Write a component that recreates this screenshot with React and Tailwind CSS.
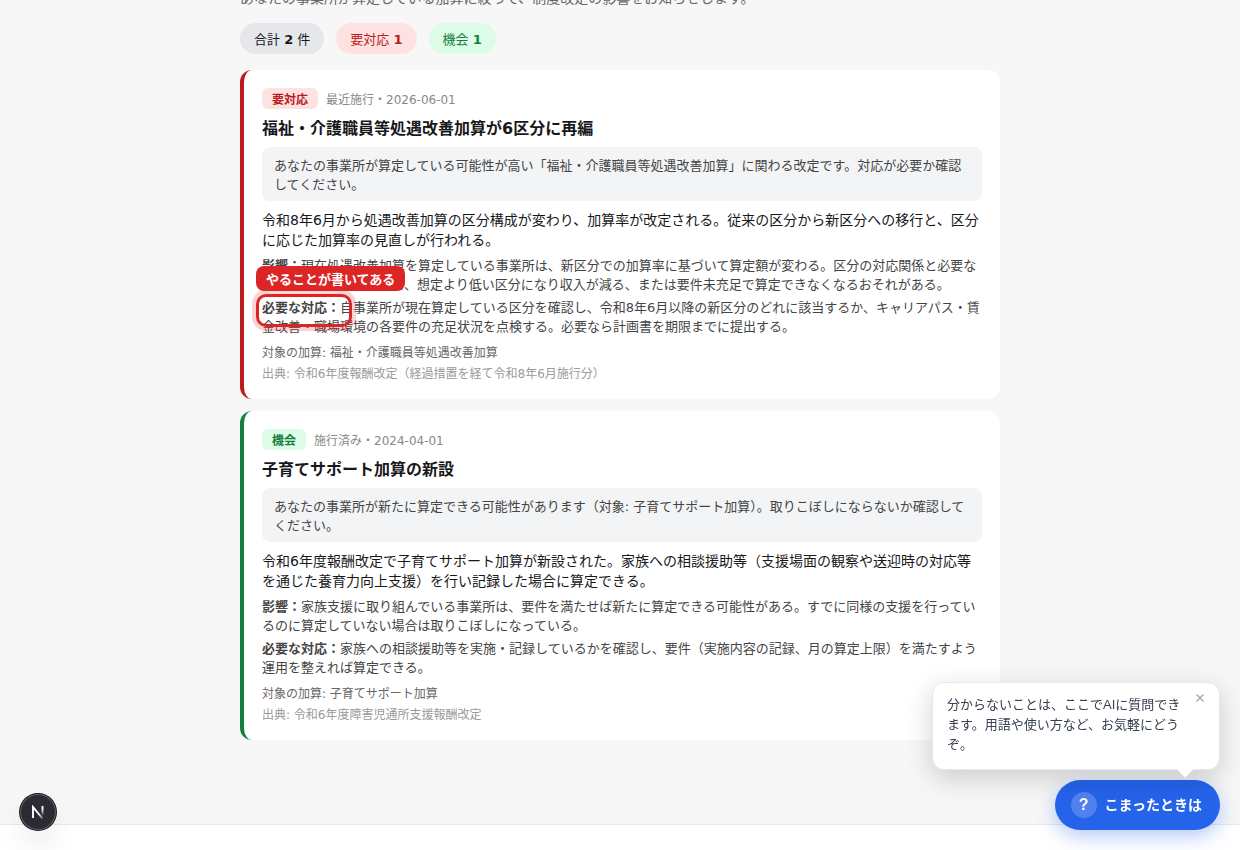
const summary = [
  { label: "合計", count: 2, unit: "件", className: "bg-[#e5e7eb] text-[#18181b]" },
  { label: "要対応", count: 1, className: "bg-[#fee2e2] text-[#b91c1c]" },
  { label: "機会", count: 1, className: "bg-[#dcfce7] text-[#15803d]" },
];

const tones = {
  action: {
    label: "要対応",
    border: "border-[#b91c1c]",
    badge: "bg-[#fee2e2] text-[#b91c1c]",
  },
  chance: {
    label: "機会",
    border: "border-[#15803d]",
    badge: "bg-[#dcfce7] text-[#15803d]",
  },
};

const revisions = [
  {
    id: "shogu",
    tone: "action",
    status: "最近施行・2026-06-01",
    title: "福祉・介護職員等処遇改善加算が6区分に再編",
    reason:
      "あなたの事業所が算定している可能性が高い「福祉・介護職員等処遇改善加算」に関わる改定です。対応が必要か確認してください。",
    body: "令和8年6月から処遇改善加算の区分構成が変わり、加算率が改定される。従来の区分から新区分への移行と、区分に応じた加算率の見直しが行われる。",
    impact:
      "現在処遇改善加算を算定している事業所は、新区分での加算率に基づいて算定額が変わる。区分の対応関係と必要な要件を確認していないと、想定より低い区分になり収入が減る、または要件未充足で算定できなくなるおそれがある。",
    todo: "自事業所が現在算定している区分を確認し、令和8年6月以降の新区分のどれに該当するか、キャリアパス・賃金改善・職場環境の各要件の充足状況を点検する。必要なら計画書を期限までに提出する。",
    target: "福祉・介護職員等処遇改善加算",
    source: "令和6年度報酬改定（経過措置を経て令和8年6月施行分）",
    note: "やることが書いてある",
  },
  {
    id: "kosodate",
    tone: "chance",
    status: "施行済み・2024-04-01",
    title: "子育てサポート加算の新設",
    reason:
      "あなたの事業所が新たに算定できる可能性があります（対象: 子育てサポート加算）。取りこぼしにならないか確認してください。",
    body: "令和6年度報酬改定で子育てサポート加算が新設された。家族への相談援助等（支援場面の観察や送迎時の対応等を通じた養育力向上支援）を行い記録した場合に算定できる。",
    impact:
      "家族支援に取り組んでいる事業所は、要件を満たせば新たに算定できる可能性がある。すでに同様の支援を行っているのに算定していない場合は取りこぼしになっている。",
    todo: "家族への相談援助等を実施・記録しているかを確認し、要件（実施内容の記録、月の算定上限）を満たすよう運用を整えれば算定できる。",
    target: "子育てサポート加算",
    source: "令和6年度障害児通所支援報酬改定",
  },
];

// Red frame and label pointing at the "必要な対応" line
function Callout({ text }) {
  return (
    <>
      <span className="absolute -top-[31px] -left-1.5 rounded-lg bg-[#dc2626] px-2.5 py-[3px] font-bold whitespace-nowrap text-white">
        {text}
      </span>
      <span className="absolute -top-[3px] -left-1.5 h-[33px] w-24 rounded-[10px] border-3 border-[#dc2626] ring-4 ring-[#dc2626]/20" />
    </>
  );
}

function RevisionCard({ item }) {
  const tone = tones[item.tone];

  return (
    <article className={`rounded-xl border-l-4 bg-white p-[18px] ${tone.border}`}>
      <div className="flex items-center gap-2 text-xs leading-[normal]">
        <span className={`rounded-md px-2.5 py-0.5 font-bold ${tone.badge}`}>{tone.label}</span>
        <span className="text-[#888]">{item.status}</span>
      </div>
      <h2 className="mt-1.5 text-base leading-[normal] font-bold">{item.title}</h2>
      <p className="mt-2 rounded-lg bg-[#f3f4f6] px-3 py-2 text-[13px] leading-[normal] text-[#444]">
        {item.reason}
      </p>
      <p className="mt-2 text-sm leading-[normal]">{item.body}</p>
      <p className="mt-1.5 text-[13px] leading-[normal] text-[#444]">
        <strong>影響：</strong>
        {item.impact}
      </p>
      <div className="relative mt-1 text-[13px] leading-[normal] text-[#444]">
        <p>
          <strong>必要な対応：</strong>
          {item.todo}
        </p>
        {item.note && <Callout text={item.note} />}
      </div>
      <p className="mt-2 text-xs leading-[normal] text-[#666]">対象の加算: {item.target}</p>
      <p className="mt-1 text-xs leading-[normal] text-[#999]">出典: {item.source}</p>
    </article>
  );
}

function HelpWidget() {
  return (
    <div className="fixed right-5 bottom-5 flex flex-col items-end gap-2.5 font-['Liberation_Sans','Noto_Sans_CJK_JP',sans-serif]">
      <div className="relative w-72 rounded-xl border border-[#e5e7eb] bg-white pt-3 pr-9 pb-3.5 pl-3.5 text-[13px] leading-5 text-[#374151] shadow-[0_8px_28px_rgba(0,0,0,0.18)]">
        分からないことは、ここでAIに質問できます。用語や使い方など、お気軽にどうぞ。
        <button
          type="button"
          aria-label="閉じる"
          className="absolute top-2 right-3 flex h-3.5 w-3.5 items-center justify-center text-[#9ca3af]">
          <svg viewBox="0 0 8 8" className="h-2 w-2" stroke="currentColor" strokeWidth="1.2">
            <path d="M0.5 0.5 7.5 7.5M7.5 0.5 0.5 7.5" />
          </svg>
        </button>
        <span className="absolute right-7 -bottom-1.5 h-3 w-3 rotate-45 bg-white" />
      </div>
      <button
        type="button"
        className="flex h-[50px] items-center gap-2 rounded-full bg-[#2563eb] pr-[18px] pl-4 text-sm font-bold text-white shadow-[0_6px_20px_rgba(37,99,235,0.35)]">
        <span className="flex h-[26px] w-[26px] items-center justify-center rounded-full bg-white/20 text-base">
          ?
        </span>
        こまったときは
      </button>
    </div>
  );
}

function DevBadge() {
  return (
    <button
      type="button"
      aria-label="Next.js"
      className="fixed bottom-5 left-5 flex h-9 w-9 items-center justify-center rounded-full bg-[#2d2a33] shadow-[0_0_0_1px_#171717,inset_0_0_0_1px_rgba(255,255,255,0.25),0_16px_32px_-8px_rgba(0,0,0,0.24)]">
      <svg viewBox="0 0 14 14" className="h-3.5 w-3.5" fill="none">
        <defs>
          <linearGradient id="stem" x1="0" y1="1" x2="0" y2="11" gradientUnits="userSpaceOnUse">
            <stop offset="0.3" stopColor="#fff" />
            <stop offset="1" stopColor="#fff" stopOpacity="0" />
          </linearGradient>
          <linearGradient id="slash" x1="8" y1="9" x2="12" y2="14" gradientUnits="userSpaceOnUse">
            <stop stopColor="#fff" />
            <stop offset="1" stopColor="#fff" stopOpacity="0.2" />
          </linearGradient>
        </defs>
        <path d="M2 13V2L11.5 13.5" stroke="url(#slash)" strokeWidth="1.9" />
        <path d="M11.5 1V11" stroke="url(#stem)" strokeWidth="1.9" />
      </svg>
    </button>
  );
}

export default function App() {
  return (
    <div className="flex h-screen flex-col overflow-hidden bg-[#f7f7f7] font-['DejaVu_Sans','Noto_Sans_CJK_JP',sans-serif] text-[#18181b]">
      <main className="mx-auto w-full max-w-[760px] flex-1">
        <p className="-mt-3 text-sm leading-5 text-[#666]">
          あなたの事業所が算定している加算に絞って、制度改定の影響をお知らせします。
        </p>
        <div className="mt-[15px] flex gap-3 text-[13px] leading-[normal]">
          {summary.map((s) => (
            <span key={s.label} className={`rounded-full px-3.5 py-1.5 ${s.className}`}>
              {s.label} <strong>{s.count}</strong>
              {s.unit && ` ${s.unit}`}
            </span>
          ))}
        </div>
        <div className="mt-4 flex flex-col gap-3">
          {revisions.map((item) => (
            <RevisionCard key={item.id} item={item} />
          ))}
        </div>
      </main>
      <footer className="h-[26px] shrink-0 border-t border-[#e5e7eb] bg-white" />
      <HelpWidget />
      <DevBadge />
    </div>
  );
}
